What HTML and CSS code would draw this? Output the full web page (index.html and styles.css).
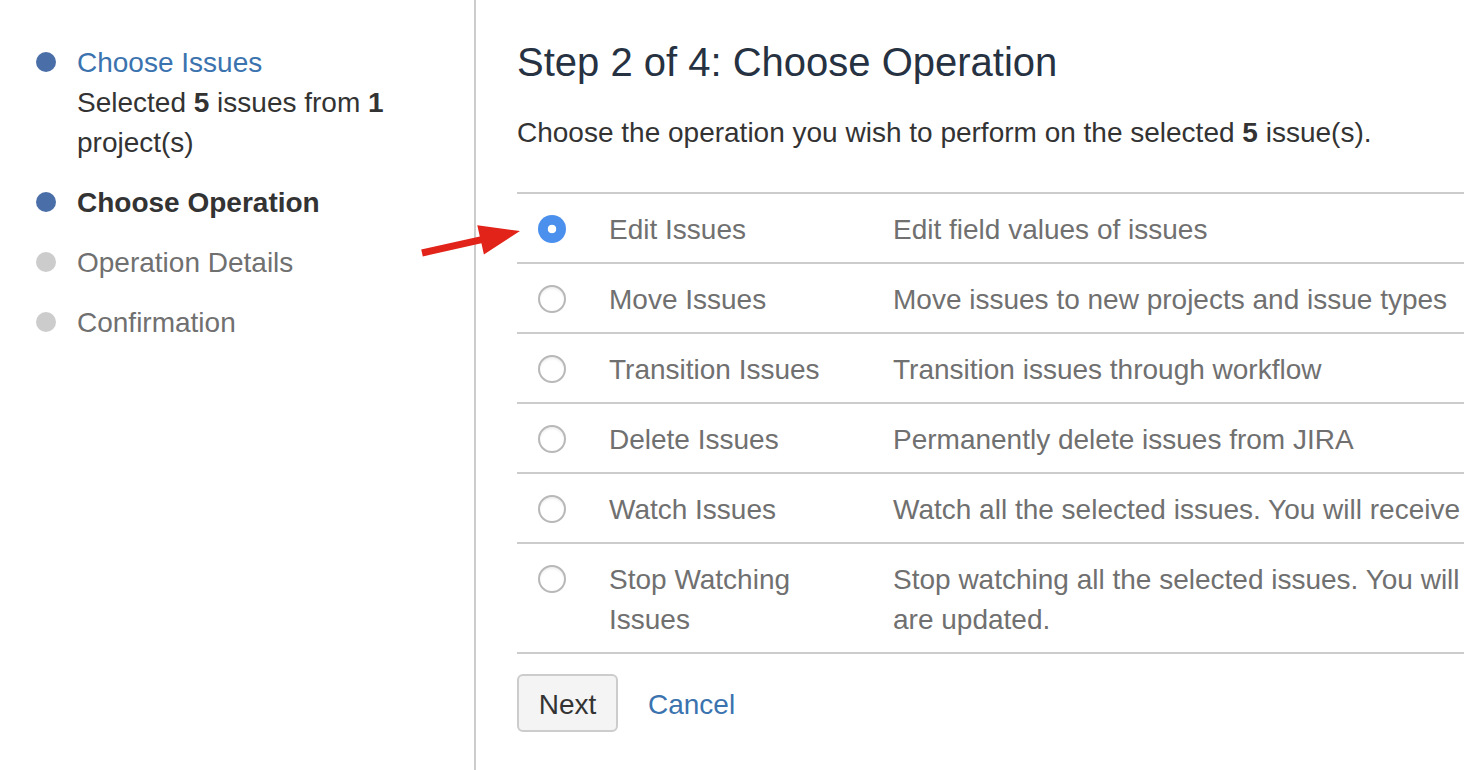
FILE: index.html
```html
<!DOCTYPE html>
<html lang="en">
<head>
<meta charset="utf-8">
<title>Bulk Operation: Choose Operation</title>
<link rel="stylesheet" href="styles.css">
</head>
<body>
<div class="page">
  <aside class="steps">
    <ol class="step-list">
      <li class="step done">
        <span class="dot"></span>
        <div class="step-body">
          <a class="step-link" href="#">Choose Issues</a>
          <div class="step-note">Selected <b>5</b> issues from <b>1</b> project(s)</div>
        </div>
      </li>
      <li class="step current">
        <span class="dot"></span>
        <div class="step-body">Choose Operation</div>
      </li>
      <li class="step todo">
        <span class="dot"></span>
        <div class="step-body">Operation Details</div>
      </li>
      <li class="step todo">
        <span class="dot"></span>
        <div class="step-body">Confirmation</div>
      </li>
    </ol>
  </aside>
  <main class="content">
    <h2 class="title">Step 2 of 4: Choose Operation</h2>
    <p class="intro">Choose the operation you wish to perform on the selected <b>5</b> issue(s).</p>
    <div class="ops">
      <label class="op">
        <span class="op-radio"><span class="radio checked"></span></span>
        <span class="op-name">Edit Issues</span>
        <span class="op-desc">Edit field values of issues</span>
      </label>
      <label class="op">
        <span class="op-radio"><span class="radio"></span></span>
        <span class="op-name">Move Issues</span>
        <span class="op-desc">Move issues to new projects and issue types</span>
      </label>
      <label class="op">
        <span class="op-radio"><span class="radio"></span></span>
        <span class="op-name">Transition Issues</span>
        <span class="op-desc">Transition issues through workflow</span>
      </label>
      <label class="op">
        <span class="op-radio"><span class="radio"></span></span>
        <span class="op-name">Delete Issues</span>
        <span class="op-desc">Permanently delete issues from JIRA</span>
      </label>
      <label class="op">
        <span class="op-radio"><span class="radio"></span></span>
        <span class="op-name">Watch Issues</span>
        <span class="op-desc">Watch all the selected issues. You will receive notifications when any of the issues are updated.</span>
      </label>
      <label class="op">
        <span class="op-radio"><span class="radio"></span></span>
        <span class="op-name">Stop Watching Issues</span>
        <span class="op-desc">Stop watching all the selected issues. You will no longer receive notifications when any of the issues are updated.</span>
      </label>
    </div>
    <div class="actions">
      <button class="btn" type="button">Next</button>
      <a class="cancel" href="#">Cancel</a>
    </div>
  </main>
</div>
<svg class="annotation" width="1464" height="770" viewBox="0 0 1464 770" aria-hidden="true">
  <polygon fill="#e2231a" points="421.2,249.6 479.8,236.5 477.3,225.3 520,231 483.9,254.5 481.4,243.3 422.8,256.4"/>
</svg>
</body>
</html>
```
FILE: styles.css
```css
html, body {
  margin: 0;
  padding: 0;
  height: 770px;
  overflow: hidden;
  background: #fff;
}

body {
  font-family: "Liberation Sans", Arial, Helvetica, sans-serif;
  font-size: 28px;
  line-height: 40px;
  color: #333;
  position: relative;
}

.page {
  display: flex;
  height: 770px;
}

.steps {
  flex: 0 0 476px;
  box-sizing: border-box;
  border-right: 2px solid #ccc;
  padding: 43px 0 0 36px;
}

.step-list {
  list-style: none;
  margin: 0;
  padding: 0;
  display: flex;
  flex-direction: column;
  gap: 20px;
}

.step {
  display: flex;
  align-items: flex-start;
  gap: 21px;
}

.dot {
  flex: 0 0 20px;
  height: 20px;
  border-radius: 50%;
  margin-top: 9px;
  background: #4a6fa8;
}

.step.todo .dot {
  background: #ccc;
}

.step-body {
  width: 360px;
}

.step.current .step-body {
  font-weight: bold;
  color: #333;
}

.step.todo .step-body {
  color: #707070;
}

.step-link {
  color: #3b73af;
  text-decoration: none;
}

.step-note {
  color: #333;
}

.content {
  flex: none;
  padding: 32px 0 0 41px;
}

.title {
  margin: 0 0 21px;
  font-size: 40px;
  line-height: 60px;
  font-weight: normal;
  color: #263242;
}

.intro {
  margin: 0 0 39px;
  color: #333;
}

.ops {
  width: 1646px;
  border-bottom: 2px solid #ccc;
}

.op {
  display: grid;
  grid-template-columns: 72px 284px 1290px;
  border-top: 2px solid #ccc;
  color: #707070;
  cursor: pointer;
}

.op > span {
  padding: 16px 20px 12px;
}

.op-radio {
  padding-left: 21px !important;
  padding-right: 0 !important;
}

.radio {
  display: block;
  box-sizing: border-box;
  width: 28px;
  height: 28px;
  margin-top: 5px;
  border-radius: 50%;
  border: 2px solid #b8b8b8;
  background: #fff;
  box-shadow: inset 0 2px 2px rgba(0, 0, 0, 0.06);
}

.radio.checked {
  border: none;
  box-shadow: none;
  background: radial-gradient(circle, #fff 0 4px, #4b90ec 4.6px);
}

.actions {
  display: flex;
  align-items: center;
  gap: 30px;
  margin-top: 20px;
}

.btn {
  font-family: inherit;
  font-size: 28px;
  line-height: 40px;
  color: #333;
  background: #f4f4f4;
  border: 2px solid #ccc;
  border-radius: 6px;
  padding: 9px 19px 5px;
  margin: 0;
  width: 101px;
}

.cancel {
  color: #3b73af;
  text-decoration: none;
  padding-top: 4px;
}

.annotation {
  position: absolute;
  left: 0;
  top: 0;
  pointer-events: none;
}
```
